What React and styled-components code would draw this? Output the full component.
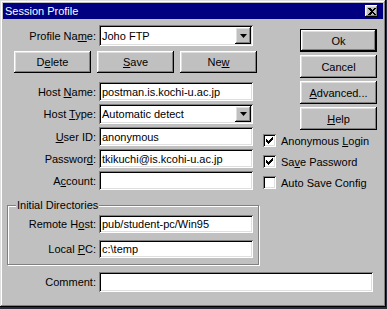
import React from "react";
import styled, { createGlobalStyle } from "styled-components";

const Global = createGlobalStyle`
  html, body { margin: 0; padding: 0; background: #2a2c3c; }
  body { font-family: "Liberation Sans", Arial, sans-serif; font-size: 11px; color: #000; }
  * { box-sizing: border-box; }
`;

const raised = `
  box-shadow: inset -1px -1px #000, inset 1px 1px #fff, inset -2px -2px #808080, inset 2px 2px #dfdfdf;
`;
const sunken = `
  box-shadow: inset 1px 1px #808080, inset -1px -1px #fff, inset 2px 2px #000, inset -2px -2px #dfdfdf;
`;

const Window = styled.div`
  width: 386px;
  height: 307px;
  background: #c0c0c0;
  padding: 3px;
  box-shadow: inset -1px -1px #000, inset 1px 1px #dfdfdf, inset -2px -2px #808080, inset 2px 2px #fff;
  display: flex;
  flex-direction: column;
`;
const TitleBar = styled.div`
  height: 16px;
  background: #000080;
  color: #fff;
  display: flex;
  align-items: center;
  justify-content: space-between;
  padding: 0 5px 0 2px;
`;
const CloseBox = styled.div`
  width: 13px;
  height: 12px;
  background: #c0c0c0;
  ${raised}
  display: flex;
  align-items: center;
  justify-content: center;
`;
const Body = styled.div`
  padding: 6px 0 0 4px;
  display: flex;
  flex-direction: column;
`;
const Top = styled.div`
  display: flex;
`;
const LeftCol = styled.div`
  width: 252px;
  display: flex;
  flex-direction: column;
`;
const RightCol = styled.div`
  margin-left: 4px;
  width: 114px;
  padding-top: 4px;
  display: flex;
  flex-direction: column;
  align-items: flex-end;
`;
const Row = styled.div`
  display: flex;
  align-items: center;
  height: ${p => p.h || 19}px;
  margin-top: ${p => p.mt || 0}px;
`;
const Label = styled.label`
  width: ${p => p.w || 89}px;
  text-align: right;
  margin-right: 3px;
  white-space: nowrap;
`;
const U = styled.span`
  text-decoration: underline;
  text-underline-offset: 1px;
`;
const Field = styled.div`
  width: ${p => p.w || 154}px;
  height: 100%;
  background: #fff;
  ${sunken}
  padding: 0 3px;
  display: flex;
  align-items: center;
  white-space: nowrap;
  position: relative;
`;
const ArrowBtn = styled.div`
  position: absolute;
  right: 2px;
  top: 2px;
  bottom: 2px;
  width: 16px;
  background: #c0c0c0;
  ${raised}
  display: flex;
  align-items: center;
  justify-content: center;
`;
const ButtonRow = styled.div`
  display: flex;
  gap: 6px;
  padding-left: 7px;
  margin-top: 5px;
`;
const Button = styled.div`
  width: 77px;
  height: ${p => p.h || 22}px;
  background: #c0c0c0;
  ${raised}
  ${p => p.def && "border: 1px solid #000;"}
  display: flex;
  align-items: center;
  justify-content: center;
  margin-top: ${p => p.mt || 0}px;
`;
const Fields = styled.div`
  display: flex;
  flex-direction: column;
  gap: 3px;
  margin-top: 9px;
`;
const Group = styled.fieldset`
  margin: 9px 0 0 0;
  width: 252px;
  padding: 3px 4px 6px 0;
  border: 1px solid #808080;
  box-shadow: 1px 1px 0 #fff, inset 1px 1px 0 #fff;
  display: flex;
  flex-direction: column;
  gap: 7px;
`;
const Legend = styled.legend`
  margin-left: 8px;
  padding: 0 1px;
  background: #c0c0c0;
  line-height: 13px;
`;
const Check = styled.div`
  display: flex;
  align-items: center;
  height: 21px;
  width: 114px;
`;
const Box = styled.div`
  width: 13px;
  height: 13px;
  background: #fff;
  ${sunken}
  margin-right: 5px;
  display: flex;
  align-items: center;
  justify-content: center;
`;

const Arrow = () => (
  <svg width="7" height="4" viewBox="0 0 7 4">
    <path d="M0 0h7L3.5 4z" fill="#000" />
  </svg>
);

const Tick = () => (
  <svg width="7" height="7" viewBox="0 0 7 7" shapeRendering="crispEdges">
    <path d="M0 2h1v1h1v1h1v-1h1v-1h1v-1h1v-1h1v3h-1v1h-1v1h-1v1h-1v1h-1v-1h-1v-1h-1z" fill="#000" />
  </svg>
);

const Combo = ({ children, w }) => (
  <Field w={w}>
    {children}
    <ArrowBtn><Arrow /></ArrowBtn>
  </Field>
);

const CheckRow = ({ on, children }) => (
  <Check>
    <Box>{on && <Tick />}</Box>
    <span>{children}</span>
  </Check>
);

export default function App() {
  return (
    <>
      <Global />
      <Window>
        <TitleBar>
          <span>Session Profile</span>
          <CloseBox>
            <svg width="8" height="7" viewBox="0 0 8 7" shapeRendering="crispEdges">
              <path d="M0 0h2l2 2 2-2h2L5 3.5 8 7H6L4 5 2 7H0l3-3.5z" fill="#000" />
            </svg>
          </CloseBox>
        </TitleBar>
        <Body>
          <Top>
            <LeftCol>
              <Row h={21}>
                <Label>Profile Na<U>m</U>e:</Label>
                <Combo>Joho FTP</Combo>
              </Row>
              <ButtonRow>
                <Button>D<U>e</U>lete</Button>
                <Button><U>S</U>ave</Button>
                <Button>Ne<U>w</U></Button>
              </ButtonRow>
              <Fields>
                <Row>
                  <Label>Host <U>N</U>ame:</Label>
                  <Field>postman.is.kochi-u.ac.jp</Field>
                </Row>
                <Row h={20}>
                  <Label>Host <U>T</U>ype:</Label>
                  <Combo>Automatic detect</Combo>
                </Row>
                <Row>
                  <Label><U>U</U>ser ID:</Label>
                  <Field>anonymous</Field>
                </Row>
                <Row>
                  <Label>Passwor<U>d</U>:</Label>
                  <Field>tkikuchi@is.kcohi-u.ac.jp</Field>
                </Row>
                <Row>
                  <Label>A<U>c</U>count:</Label>
                  <Field />
                </Row>
              </Fields>
              <Group>
                <Legend>Initial Directories</Legend>
                <Row h={18}>
                  <Label w={88}>Remote H<U>o</U>st:</Label>
                  <Field>pub/student-pc/Win95</Field>
                </Row>
                <Row h={18}>
                  <Label w={88}>Local <U>P</U>C:</Label>
                  <Field>c:\temp</Field>
                </Row>
              </Group>
            </LeftCol>
            <RightCol>
              <Button def h={23}>Ok</Button>
              <Button h={23} mt={3}>Cancel</Button>
              <Button h={23} mt={3}><U>A</U>dvanced...</Button>
              <Button h={23} mt={3}><U>H</U>elp</Button>
              <CheckRow on>Anonymous <U>L</U>ogin</CheckRow>
              <CheckRow on>Sa<U>v</U>e Password</CheckRow>
              <CheckRow>Auto Save Config</CheckRow>
            </RightCol>
          </Top>
          <Row h={20} mt={7}>
            <Label>Comment:</Label>
            <Field w={274} />
          </Row>
        </Body>
      </Window>
    </>
  );
}
